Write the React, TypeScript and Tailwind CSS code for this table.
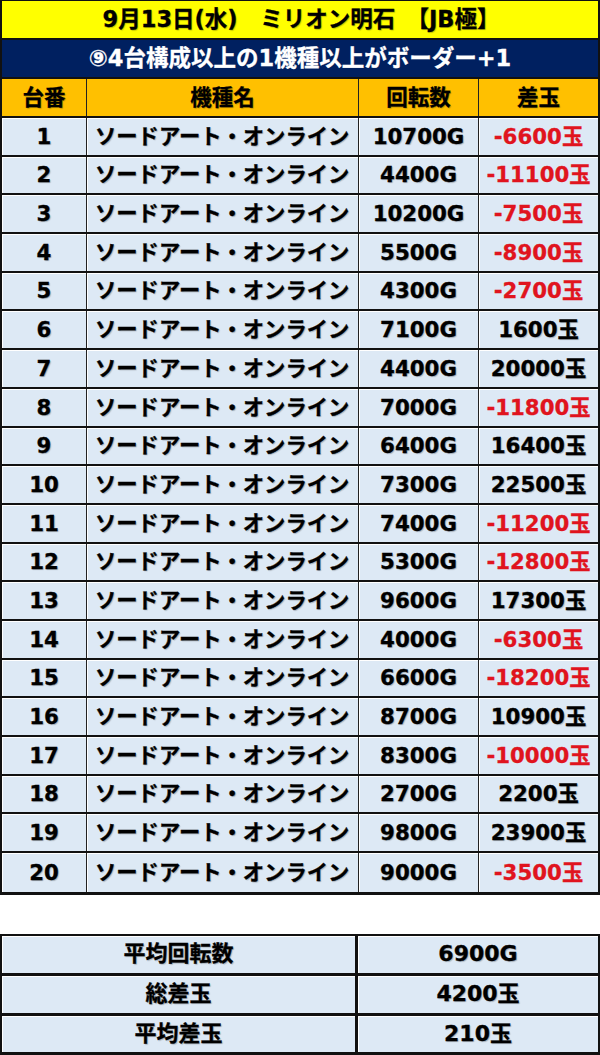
const rows: [number, string, string][] = [
  [1, "10700G", "-6600玉"],
  [2, "4400G", "-11100玉"],
  [3, "10200G", "-7500玉"],
  [4, "5500G", "-8900玉"],
  [5, "4300G", "-2700玉"],
  [6, "7100G", "1600玉"],
  [7, "4400G", "20000玉"],
  [8, "7000G", "-11800玉"],
  [9, "6400G", "16400玉"],
  [10, "7300G", "22500玉"],
  [11, "7400G", "-11200玉"],
  [12, "5300G", "-12800玉"],
  [13, "9600G", "17300玉"],
  [14, "4000G", "-6300玉"],
  [15, "6600G", "-18200玉"],
  [16, "8700G", "10900玉"],
  [17, "8300G", "-10000玉"],
  [18, "2700G", "2200玉"],
  [19, "9800G", "23900玉"],
  [20, "9000G", "-3500玉"],
];

const summary: [string, string][] = [
  ["平均回転数", "6900G"],
  ["総差玉", "4200玉"],
  ["平均差玉", "210玉"],
];

const cell = "flex items-center border-r border-[#222] shadow-[inset_1px_1px_0_#ffffff]";

export default function App() {
  return (
    <div
      className="w-[600px] h-[1055px] bg-white font-bold text-black leading-none [text-shadow:1px_1px_1px_rgba(0,0,0,0.25)] [-webkit-text-stroke:0.3px_currentColor]"
      style={{ fontFamily: '"DejaVu Sans", "Noto Sans CJK JP", sans-serif' }}
    >
      {/* main table */}
      <div className="border-x-2 border-t border-b-[3px] border-[#111]">
        <div className="h-[39px] bg-[#ffff00] border-b-2 border-[#111] flex items-center justify-center text-[22.5px] pl-[2px]">
          9月13日(水)　ミリオン明石　【JB極】
        </div>
        <div className="h-[39px] bg-[#002060] border-b-2 border-[#111] flex items-center justify-center text-[22.5px] text-white [text-shadow:none]">
          ⑨4台構成以上の1機種以上がボーダー+1
        </div>
        <div className="h-[39px] bg-[#ffc000] border-b-2 border-[#111] grid grid-cols-[85px_272px_120px_119px] text-[21.5px]">
          <div className={`${cell} justify-center shadow-none`}>台番</div>
          <div className={`${cell} justify-center shadow-none`}>機種名</div>
          <div className={`${cell} justify-center shadow-none`}>回転数</div>
          <div className="flex items-center justify-center">差玉</div>
        </div>
        {rows.map(([no, spins, diff], i) => (
          <div
            key={no}
            className={`h-[38.7px] bg-[#dde9f5] grid grid-cols-[85px_272px_120px_119px] text-[21.3px] ${
              i < rows.length - 1 ? "border-b-2 border-[#111]" : ""
            }`}
          >
            <div className={`${cell} justify-center`}>{no}</div>
            <div className={`${cell} pl-[8px]`}>ソードアート・オンライン</div>
            <div className={`${cell} justify-center`}>{spins}</div>
            <div
              className={`flex items-center justify-center shadow-[inset_1px_1px_0_#ffffff] ${
                diff.startsWith("-") ? "text-[#e0141e] [text-shadow:none]" : ""
              }`}
            >
              {diff}
            </div>
          </div>
        ))}
      </div>

      {/* summary table */}
      <div className="mt-[39px] border-x-2 border-t-2 border-b-[3px] border-[#111]">
        {summary.map(([label, value], i) => (
          <div
            key={label}
            className={`bg-[#dde9f5] grid grid-cols-[356px_1fr] text-[22px] ${
              i < summary.length - 1 ? "h-[40px] border-b-[3px] border-[#111]" : "h-[36px]"
            }`}
          >
            <div className="flex items-center justify-center border-r-[3px] border-[#111] shadow-[inset_1px_1px_0_#ffffff]">
              {label}
            </div>
            <div className="flex items-center justify-center shadow-[inset_1px_1px_0_#ffffff]">{value}</div>
          </div>
        ))}
      </div>
    </div>
  );
}
